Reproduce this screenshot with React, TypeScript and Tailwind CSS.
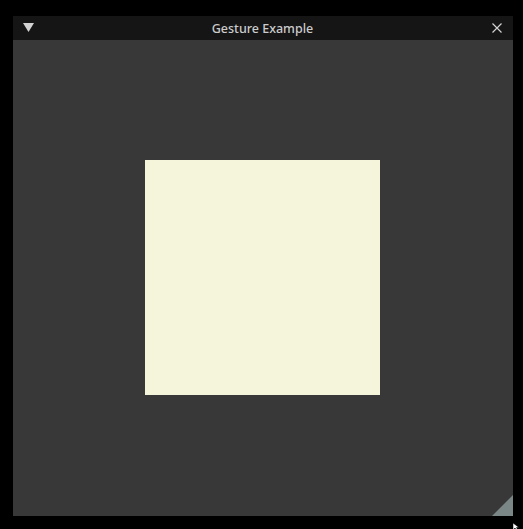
export default function App() {
  return (
    <div className="w-[523px] h-[529px] bg-black relative overflow-hidden" style={{ fontFamily: '"Noto Sans", "DejaVu Sans", sans-serif' }}>
      <div className="absolute left-[13px] top-[16px] w-[500px] h-[500px] flex flex-col">
        <div className="h-[24px] bg-[#151515] relative flex items-center justify-center">
          <svg className="absolute left-[10px] top-[7px]" width="11" height="9" viewBox="0 0 11 9">
            <polygon points="0,0 11,0 5.5,9" fill="#d2d2d2" />
          </svg>
          <span className="text-[12.5px] leading-none font-medium text-[#cccccc] translate-x-[-0.5px] translate-y-[1px]">Gesture Example</span>
          <svg className="absolute left-[479px] top-[7px]" width="10" height="10" viewBox="0 0 10 10">
            <path d="M0.5 0.5 L9.5 9.5 M9.5 0.5 L0.5 9.5" stroke="#d2d2d2" strokeWidth="1.2" />
          </svg>
        </div>
        <div className="flex-1 bg-[#383838] relative pt-[120px] pl-[132px]">
          <div className="w-[235px] h-[235px] bg-[#f5f5dc]" />
          <svg className="absolute right-0 bottom-0" width="21" height="21" viewBox="0 0 21 21">
            <polygon points="21,0 21,21 0,21" fill="#7b8686" />
          </svg>
        </div>
      </div>
      <svg className="absolute left-[513px] top-[523px]" width="8" height="8" viewBox="0 0 8 8">
        <path d="M0 0 L0 7 L2 5 L4 8 L5 7.5 L3.5 4.5 L6 4.5 Z" fill="#ffffff" stroke="#000" strokeWidth="0.5" />
      </svg>
    </div>
  );
}
